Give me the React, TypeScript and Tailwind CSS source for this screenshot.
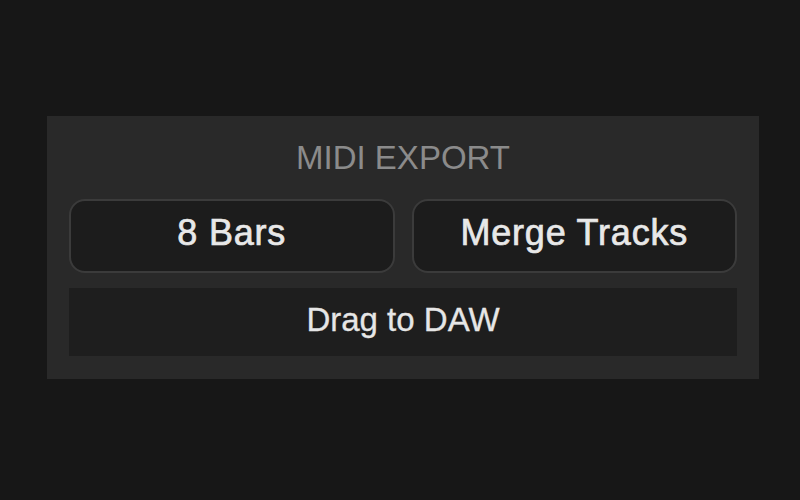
export default function App() {
  return (
    <div
      className="w-[800px] h-[500px] bg-[#171717] pt-[116px] pl-[47px]"
      style={{ fontFamily: '"Liberation Sans", Arial, sans-serif' }}
    >
      <div className="w-[712px] h-[263px] bg-[#292929] flex flex-col px-[22px] pt-[22px]">
        <div className="text-[33px] leading-[40px] text-[#8b8b8b] text-center">MIDI EXPORT</div>
        <div className="mt-[21px] flex gap-[17px]">
          <div className="flex-1 h-[74px] rounded-[16px] border-2 border-[#3b3b3b] bg-[#1c1c1c] flex items-center justify-center pb-[6px] text-[36px] tracking-[0.8px] [-webkit-text-stroke:0.7px_#e8e8e8] text-[#e8e8e8]">
            8 Bars
          </div>
          <div className="flex-1 h-[74px] rounded-[16px] border-2 border-[#3b3b3b] bg-[#1c1c1c] flex items-center justify-center pb-[6px] text-[36px] tracking-[0.8px] [-webkit-text-stroke:0.7px_#e8e8e8] text-[#e8e8e8]">
            Merge Tracks
          </div>
        </div>
        <div className="mt-[15px] h-[68px] bg-[#1e1e1e] flex items-center justify-center pb-[5px] text-[33px] [-webkit-text-stroke:0.3px_#e6e6e6] text-[#e6e6e6]">
          Drag to DAW
        </div>
      </div>
    </div>
  );
}
